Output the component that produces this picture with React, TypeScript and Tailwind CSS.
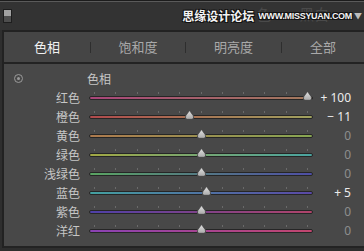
const rows = [
  { label: '红色', value: 100, text: '+ 100', from: '#a8467a', to: '#a27a5c' },
  { label: '橙色', value: -11, text: '− 11', from: '#b04a4c', to: '#a0a25e' },
  { label: '黄色', value: 0, text: '0', from: '#ad7a4e', to: '#88a652' },
  { label: '绿色', value: 0, text: '0', from: '#a2a844', to: '#4aa4a0' },
  { label: '浅绿色', value: 0, text: '0', from: '#5aa462', to: '#4e4ea6' },
  { label: '蓝色', value: 5, text: '+ 5', from: '#44a0a0', to: '#5a48a6' },
  { label: '紫色', value: 0, text: '0', from: '#4e40a8', to: '#b0446a' },
  { label: '洋红', value: 0, text: '0', from: '#8a42b4', to: '#c2466e' },
];

const ticks = Array.from({ length: 11 }, (_, i) => i);

function Thumb() {
  return (
    <svg width="11" height="10" viewBox="0 0 11 10" className="block">
      <defs>
        <linearGradient id="tg" x1="0" y1="0" x2="0" y2="1">
          <stop offset="0" stopColor="#e2e2e2" />
          <stop offset="1" stopColor="#a9a9a9" />
        </linearGradient>
      </defs>
      <path d="M5.5 0.5 L9.2 5.6 Q10.6 8.6 8 9.3 H3 Q0.4 8.6 1.8 5.6 Z" fill="url(#tg)" stroke="#3a3a3a" strokeWidth="0.7" />
    </svg>
  );
}

function Slider({ value, from, to }: { value: number; from: string; to: string }) {
  const x = 112 + value * 1.06;
  return (
    <div className="relative h-[19px] w-[224px]">
      {ticks.map((i) => (
        <div
          key={i}
          className="absolute top-[4px] h-[2px] w-px bg-[#6a6a6a]"
          style={{ left: 5 + i * 21.3 }}
        />
      ))}
      <div
        className="absolute left-0 right-0 top-[8px] h-[4px] rounded-full border border-[#262626]"
        style={{ background: `linear-gradient(to right, ${from}, ${to})` }}
      />
      <div className="absolute top-[3px]" style={{ left: x - 5.5 }}>
        <Thumb />
      </div>
    </div>
  );
}

const outline = '[text-shadow:1px_1px_0_#111,-1px_-1px_0_#111,1px_-1px_0_#111,-1px_1px_0_#111]';

export default function App() {
  return (
    <div className="h-[251px] w-[364px] overflow-hidden bg-[#2e2e2e] font-['Noto_Sans_CJK_SC','Noto_Sans',sans-serif]">
      <div className="h-px bg-[#1c1c1c]" />
      <div className="flex h-[29px] items-center border-t border-[#5a5a5a] bg-[#333333] pl-[3px] pr-[2px]">
        <div className="flex h-[14px] w-[9px] flex-col border border-[#1e1e1e]">
          <div className="flex-1 bg-[#a2a2a2]" />
          <div className="flex-1 bg-[#4e4e4e]" />
        </div>
        <div className="relative ml-auto flex items-center">
          <div className="absolute left-[74px] top-[-4px] flex gap-[28px] text-[15px] leading-none text-[#4a4a4a]">
            <span>色</span>
            <span>黑白</span>
          </div>
          <span className={`relative w-[73px] whitespace-nowrap text-[12px] font-bold leading-none text-[#f4f4f4] ${outline}`}>
            思缘设计论坛
          </span>
          <span
            className={`relative ml-[3px] font-['Liberation_Sans',sans-serif] text-[9px] font-bold leading-none tracking-[-0.3px] text-[#f4f4f4] ${outline}`}
          >
            WWW.MISSYUAN.COM
          </span>
          <span className="relative ml-[2px] text-[8px] leading-none text-[#bdbdbd]">▼</span>
        </div>
      </div>
      <div className="ml-[2px] border-l-2 border-t-2 border-[#222222]">
        <div className="flex h-[30px] items-center bg-[#454545] text-[13px]">
          <div className="w-[86px] text-center text-[#f2f2f2]">色相</div>
          <div className="h-[11px] w-px bg-[#2e2e2e]" />
          <div className="w-[94px] text-center text-[#a9a9a9]">饱和度</div>
          <div className="h-[11px] w-px bg-[#2e2e2e]" />
          <div className="w-[95px] text-center text-[#a9a9a9]">明亮度</div>
          <div className="h-[11px] w-px bg-[#2e2e2e]" />
          <div className="flex-1 text-center text-[#a9a9a9]">全部</div>
        </div>
        <div className="border-y-2 border-[#232323] bg-[#484848] pb-[6px] pt-[5px]">
          <div className="flex h-[19px] items-center">
            <div className="ml-[10px] flex h-[9px] w-[9px] items-center justify-center rounded-full border border-[#9a9a9a]">
              <div className="h-[3px] w-[3px] rounded-full bg-[#9a9a9a]" />
            </div>
            <span className="ml-[64px] text-[12px] text-[#c6c6c6]">色相</span>
          </div>
          {rows.map((r) => (
            <div key={r.label} className="flex h-[19px] items-center">
              <div className="w-[76px] text-right text-[12px] leading-none text-[#c6c6c6]">{r.label}</div>
              <div className="ml-[9px]">
                <Slider value={r.value} from={r.from} to={r.to} />
              </div>
              <div
                className={`w-[38px] whitespace-nowrap text-right font-['Noto_Sans',sans-serif] text-[12px] leading-none ${
                  r.value === 0 ? 'text-[#8e8e8e]' : 'text-[#ececec]'
                }`}
              >
                {r.text}
              </div>
            </div>
          ))}
        </div>
      </div>
    </div>
  );
}
